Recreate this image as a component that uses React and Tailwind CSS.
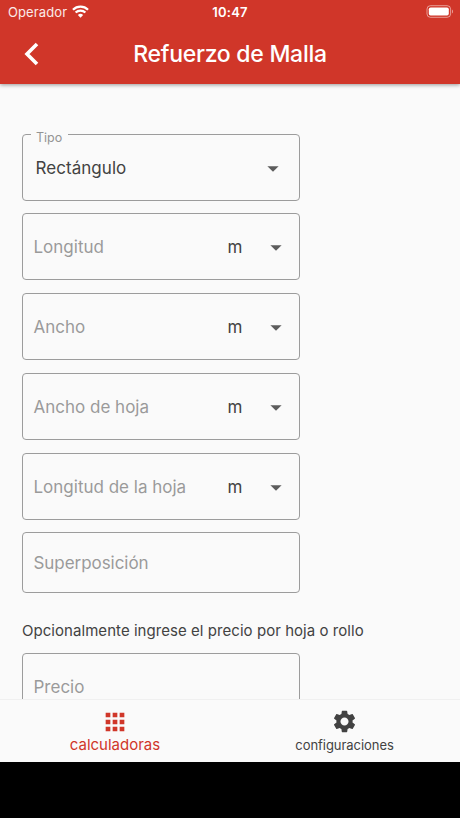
import React, { useState } from 'react';
import { MdApps, MdSettings } from 'react-icons/md';

const FIELDS = [
  { id: 'longitud', label: 'Longitud' },
  { id: 'ancho', label: 'Ancho' },
  { id: 'anchoHoja', label: 'Ancho de hoja' },
  { id: 'longitudHoja', label: 'Longitud de la hoja' },
];

function Caret() {
  return (
    <svg width="12" height="6" viewBox="0 0 12 6" className="shrink-0 text-[#5c5c5c]">
      <path d="M0.4 0.2h11.2L6 5.8z" fill="currentColor" />
    </svg>
  );
}

function StatusBar() {
  return (
    <div className="grid grid-cols-3 items-center h-6 px-2 text-[13px] text-white/90">
      <div className="flex items-center gap-[5px]">
        <span className="pt-px tracking-[0.1px]">Operador</span>
        <svg width="17" height="13" viewBox="0 0 16 12" fill="none" stroke="white" strokeWidth="2.1" className="-mt-px">
          <path d="M0.9 4.3a10.1 10.1 0 0 1 14.2 0" />
          <path d="M3.4 7a6.5 6.5 0 0 1 9.2 0" />
          <path d="M8 11.8L5.5 9.3a3.6 3.6 0 0 1 5 0z" fill="white" stroke="none" />
        </svg>
      </div>
      <span className="pt-px text-center font-semibold tracking-[0.2px] text-white">10:47</span>
      <svg width="28" height="13" viewBox="0 0 28 13" className="justify-self-end -mr-0.5 -mt-px">
        <rect x="1" y="0.7" width="23.6" height="11.6" rx="3.4" fill="none" stroke="white" strokeOpacity="0.5" />
        <rect x="2.8" y="2.5" width="20" height="8" rx="1.8" fill="white" />
        <path d="M26 4.5v4c1.4-.6 1.4-3.4 0-4z" fill="white" fillOpacity="0.5" />
      </svg>
    </div>
  );
}

function UnitField({ label }) {
  return (
    <div className="flex items-center h-[67px] mb-[13px] border border-[#9c9c9c] rounded-[4px] pt-[2px] pl-[10.5px] pr-[17.5px]">
      <span className="flex-1 text-[17px] text-[#9a9a9a]">{label}</span>
      <span className="w-[42px] text-[17px] text-[#424242]">m</span>
      <Caret />
    </div>
  );
}

export default function App() {
  const [tab, setTab] = useState('calculadoras');

  return (
    <div className="flex flex-col h-[818px] w-[460px] overflow-hidden bg-black font-['Inter',sans-serif]">
      <header className="relative z-10 h-[84px] shrink-0 bg-[#d03629] shadow-[0_1px_4px_rgba(0,0,0,0.4)]">
        <StatusBar />
        <div className="grid grid-cols-[64px_1fr_64px] items-center h-[60px]">
          <button aria-label="Volver" className="pl-6">
            <svg width="16" height="24" viewBox="0 0 16 24" fill="none" stroke="white" strokeWidth="3.6">
              <path d="M13 2L3 12l10 10" />
            </svg>
          </button>
          <h1 className="pt-px text-center text-[23px] font-medium tracking-[-0.27px] text-white">Refuerzo de Malla</h1>
        </div>
      </header>

      <main className="h-[615px] shrink-0 overflow-hidden bg-[#fafafa] pt-[50px] pl-[22px]">
        <div className="w-[278px]">
          <div className="relative flex items-center justify-between h-[67px] mb-3 border border-[#9c9c9c] rounded-[4px] pt-[2px] pl-[12.5px] pr-5">
            <span className="absolute -top-[5px] left-2 bg-[#fafafa] pl-[5px] pr-1.5 text-[12.5px] leading-4 text-[#949494]">Tipo</span>
            <span className="text-[17px] tracking-[0.05px] text-[#424242]">Rectángulo</span>
            <Caret />
          </div>
          {FIELDS.map(f => <UnitField key={f.id} label={f.label} />)}
          <div className="flex items-center h-[61px] -mt-px border border-[#9c9c9c] rounded-[4px] pt-[2px] pl-[10.5px]">
            <span className="text-[17px] tracking-[-0.05px] text-[#9a9a9a]">Superposición</span>
          </div>
        </div>
        <p className="mt-7 mb-3 text-[15px] leading-5 tracking-[0.05px] text-[#424242] whitespace-nowrap">Opcionalmente ingrese el precio por hoja o rollo</p>
        <div className="flex items-center w-[278px] h-[67px] border border-[#9c9c9c] rounded-[4px] pt-[2px] pl-[10.5px]">
          <span className="text-[17px] text-[#9a9a9a]">Precio</span>
        </div>
      </main>

      <nav className="grid grid-cols-2 h-[63px] shrink-0 border-t border-[#f0f0f0] bg-[#fafafa]">
        <button onClick={() => setTab('calculadoras')}
          className={`flex flex-col items-center pt-2 ${tab === 'calculadoras' ? 'text-[#d03629]' : 'text-[#424242]'}`}>
          <MdApps size={28} />
          <span className="text-[15px] leading-[18px]">calculadoras</span>
        </button>
        <button onClick={() => setTab('configuraciones')}
          className={`flex flex-col items-center pt-2 pr-px ${tab === 'configuraciones' ? 'text-[#d03629]' : 'text-[#424242]'}`}>
          <MdSettings size={27} />
          <span className="pt-px text-[13px] leading-[19px] tracking-[-0.05px]">configuraciones</span>
        </button>
      </nav>
    </div>
  );
}
